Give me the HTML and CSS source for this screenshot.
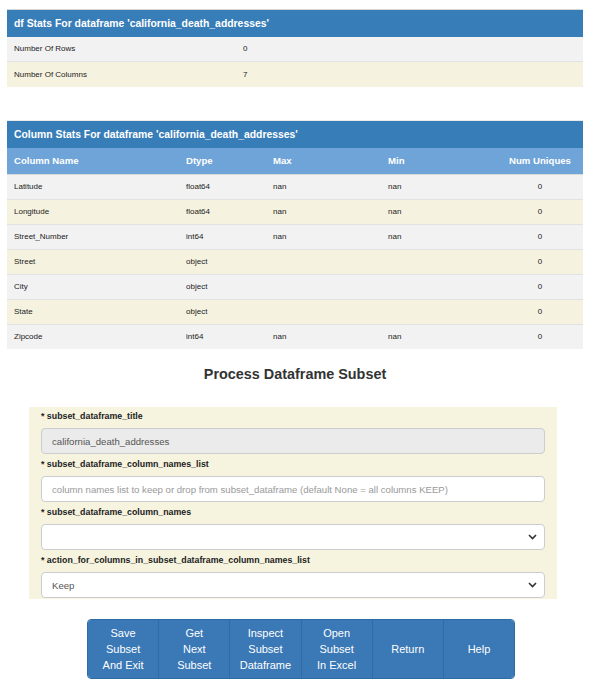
FILE: index.html
```html
<!DOCTYPE html>
<html>
<head>
<meta charset="utf-8">
<link rel="stylesheet" href="styles.css">
</head>
<body>
<table class="stats df-stats">
  <colgroup><col class="c-wide"><col></colgroup>
  <tr class="title-row"><th colspan="2">df Stats For dataframe 'california_death_addresses'</th></tr>
  <tr class="odd"><td>Number Of Rows</td><td>0</td></tr>
  <tr class="even"><td>Number Of Columns</td><td>7</td></tr>
</table>

<table class="stats col-stats">
  <colgroup><col class="c1"><col class="c2"><col class="c3"><col class="c4"><col class="c5"></colgroup>
  <tr class="title-row"><th colspan="5">Column Stats For dataframe 'california_death_addresses'</th></tr>
  <tr class="head-row"><th>Column Name</th><th>Dtype</th><th>Max</th><th>Min</th><th class="ctr">Num Uniques</th></tr>
  <tr class="odd"><td>Latitude</td><td>float64</td><td>nan</td><td>nan</td><td class="ctr">0</td></tr>
  <tr class="even"><td>Longitude</td><td>float64</td><td>nan</td><td>nan</td><td class="ctr">0</td></tr>
  <tr class="odd"><td>Street_Number</td><td>int64</td><td>nan</td><td>nan</td><td class="ctr">0</td></tr>
  <tr class="even"><td>Street</td><td>object</td><td></td><td></td><td class="ctr">0</td></tr>
  <tr class="odd"><td>City</td><td>object</td><td></td><td></td><td class="ctr">0</td></tr>
  <tr class="even"><td>State</td><td>object</td><td></td><td></td><td class="ctr">0</td></tr>
  <tr class="odd"><td>Zipcode</td><td>int64</td><td>nan</td><td>nan</td><td class="ctr">0</td></tr>
</table>

<h2 class="section-title">Process Dataframe Subset</h2>

<form class="panel">
  <label class="lbl">* subset_dataframe_title</label>
  <div class="field disabled">california_death_addresses</div>
  <label class="lbl">* subset_dataframe_column_names_list</label>
  <div class="field placeholder">column names list to keep or drop from subset_dataframe (default None = all columns KEEP)</div>
  <label class="lbl">* subset_dataframe_column_names</label>
  <div class="field select"><span></span><svg class="chev" width="9" height="6" viewBox="0 0 9 6"><path d="M1 1 L4.5 4.5 L8 1" fill="none" stroke="#333" stroke-width="1.6"/></svg></div>
  <label class="lbl">* action_for_columns_in_subset_dataframe_column_names_list</label>
  <div class="field select"><span>Keep</span><svg class="chev" width="9" height="6" viewBox="0 0 9 6"><path d="M1 1 L4.5 4.5 L8 1" fill="none" stroke="#333" stroke-width="1.6"/></svg></div>
</form>

<div class="btn-group">
  <div class="btn">Save<br>Subset<br>And Exit</div>
  <div class="btn">Get<br>Next<br>Subset</div>
  <div class="btn">Inspect<br>Subset<br>Dataframe</div>
  <div class="btn">Open<br>Subset<br>In Excel</div>
  <div class="btn">Return</div>
  <div class="btn">Help</div>
</div>
</body>
</html>
```

FILE: styles.css
```css
* { box-sizing: border-box; }
html, body { margin: 0; padding: 0; background: #fff; }
body {
  font-family: "Liberation Sans", Arial, sans-serif;
  color: #333;
  padding: 9px 9px 0 7px;
  width: 592px;
}
.stats {
  width: 576px;
  border-collapse: collapse;
  table-layout: fixed;
  font-size: 8px;
}
.stats td, .stats th { padding: 0 0 0 7px; text-align: left; }
.stats .ctr { text-align: center; padding: 0; }
.title-row th {
  background: #377db8;
  color: #fff;
  font-size: 10.4px;
  font-weight: bold;
  border-top: 1px solid #d6d6d6;
}
.df-stats .title-row th { height: 27px; }
.col-stats .title-row th { height: 28px; border-top: 1px solid #eaeaea; }
.head-row th {
  background: #6fa4d8;
  color: #fff;
  font-size: 9.6px;
  font-weight: bold;
  height: 26px;
  border-bottom: 1px solid #d9d9d9;
}
.stats td { height: 25px; color: #222; }
.odd td { background: #f2f2f2; border-bottom: 1px solid #e2e2e2; }
.even td { background: #f6f2e0; border-bottom: 1px solid #e2e2e2; }
.stats tr:last-child td { border-bottom: none; }
.c-wide { width: 229px; }
.c1 { width: 172px; }
.c2 { width: 87px; }
.c3 { width: 115px; }
.c4 { width: 116px; }
.c5 { width: 86px; }
.df-stats { margin-bottom: 33px; }

.section-title {
  margin: 16px 0 0 0;
  text-align: center;
  font-size: 14.4px;
  font-weight: bold;
  color: #333;
  line-height: 18px;
  height: 42px;
}
.panel {
  margin: 0 0 0 22px;
  width: 528px;
  background: #f6f3df;
  padding: 3px 12px 1px 12px;
  display: flex;
  flex-direction: column;
}
.lbl {
  display: block;
  font-size: 8.8px;
  font-weight: bold;
  color: #222;
  line-height: 12px;
  margin-bottom: 6px;
}
.field + .lbl { margin-top: 4px; }
.field {
  height: 26px;
  border: 1px solid #ccc;
  border-radius: 4px;
  background: #fff;
  font-size: 9.6px;
  color: #555;
  padding: 0 10px;
  display: flex;
  align-items: center;
  justify-content: space-between;
}
.field.disabled { background: #ebebeb; }
.field.placeholder { color: #999; }
.chev { margin-right: -3px; }

.btn-group {
  display: flex;
  margin: 20px 0 0 80px;
  width: 428px;
  border-radius: 4px;
  overflow: hidden;
  border: 1px solid #2e6da4;
}
.btn {
  flex: 1 1 0;
  background: #3a78b6;
  color: #fff;
  font-size: 11px;
  line-height: 16px;
  text-align: center;
  height: 58px;
  display: flex;
  align-items: center;
  justify-content: center;
  border-left: 1px solid #2e6da4;
}
.btn:first-child { border-left: none; }
```
